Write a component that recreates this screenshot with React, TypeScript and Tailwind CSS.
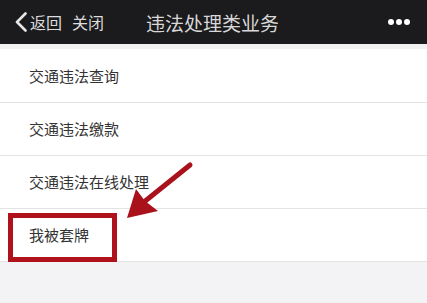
import React from "react";

const rows = ["交通违法查询", "交通违法缴款", "交通违法在线处理", "我被套牌"];

export default function App() {
  return (
    <div
      className="relative w-[427px] h-[303px] overflow-hidden bg-[#f3f2f4]"
      style={{ fontFamily: '"Noto Sans CJK SC", "Noto Sans", sans-serif' }}
    >
      <div className="h-[44px] bg-[#1b1a1d] flex items-center pl-[14px] pr-[17px] text-[#dcdcdc]">
        <svg width="14" height="20" viewBox="0 0 14 20" className="shrink-0">
          <path d="M11.5 1.5 L3 10 L11.5 18.5" fill="none" stroke="#e6e6e6" strokeWidth="2.6" strokeLinecap="round" strokeLinejoin="round" />
        </svg>
        <span className="ml-[2px] text-[16px] leading-[22px]">返回</span>
        <span className="ml-[10px] text-[16px] leading-[22px]">关闭</span>
        <span className="ml-[42px] text-[19px] leading-[25px] text-[#d8d8d8]">违法处理类业务</span>
        <div className="ml-auto flex gap-[2px]">
          <span className="w-[6px] h-[6px] rounded-full bg-white" />
          <span className="w-[6px] h-[6px] rounded-full bg-white" />
          <span className="w-[6px] h-[6px] rounded-full bg-white" />
        </div>
      </div>
      <div className="h-[5px] bg-[#f1f1f1]" />
      <div className="flex flex-col bg-white">
        {rows.map((r, i) => (
          <div
            key={r}
            className={`relative flex items-center pl-[29px] border-b border-[#e3e3e3] text-[15px] text-[#333333] ${i === 0 ? "h-[54px]" : "h-[53px]"}`}
          >
            <span className="leading-[20px]">{r}</span>
            {i === 3 && (
              <div className="absolute left-[8px] top-[4px] w-[109px] h-[49px] border-[5px] border-[#b0121c]" />
            )}
          </div>
        ))}
      </div>
      <svg className="absolute left-0 top-0 pointer-events-none" width="427" height="303" viewBox="0 0 427 303">
        <line x1="190" y1="165" x2="144" y2="202" stroke="#a9111b" strokeWidth="5" strokeLinecap="round" />
        <polygon points="127,218 136,189 145,201 158,211" fill="#a9111b" />
      </svg>
    </div>
  );
}
